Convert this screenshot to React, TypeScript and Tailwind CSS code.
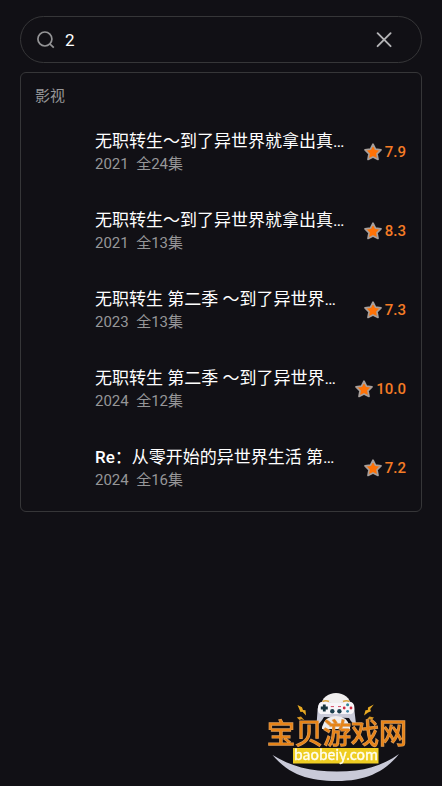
import { useState } from 'react';

type Show = {
  id: number;
  title: string;
  year: string;
  episodes: string;
  score: string;
};

const shows: Show[] = [
  { id: 1, title: '无职转生～到了异世界就拿出真本事～', year: '2021', episodes: '全24集', score: '7.9' },
  { id: 2, title: '无职转生～到了异世界就拿出真本事～', year: '2021', episodes: '全13集', score: '8.3' },
  { id: 3, title: '无职转生 第二季 ～到了异世界就拿出真本事～', year: '2023', episodes: '全13集', score: '7.3' },
  { id: 4, title: '无职转生 第二季 ～到了异世界就拿出真本事～', year: '2024', episodes: '全12集', score: '10.0' },
  { id: 5, title: 'Re：从零开始的异世界生活 第三季', year: '2024', episodes: '全16集', score: '7.2' },
];

const SearchIcon = () => (
  <svg className="h-5 w-5 shrink-0" viewBox="0 0 20 20" fill="none" stroke="#949496" strokeWidth="1.7" aria-hidden="true">
    <circle cx="7.9" cy="9" r="7" />
    <path d="M12.8 13.8 16.8 17.6" />
  </svg>
);

const CloseIcon = () => (
  <svg className="h-5 w-5" viewBox="0 0 20 20" fill="none" stroke="#b4b4b6" strokeWidth="1.9" strokeLinecap="round" aria-hidden="true">
    <path d="M3.6 3.2 16.6 16.2M16.6 3.2 3.6 16.2" />
  </svg>
);

const StarIcon = () => (
  <svg className="h-5 w-5 shrink-0" viewBox="0 0 20 20" aria-hidden="true">
    <path
      d="M10 2.2 12.5 7.1 18 7.9 14 11.8 15 17.4 10 14.9 5 17.4 6 11.8 2 7.9 7.5 7.1Z"
      fill="#ff7206"
      stroke="#a8a09c"
      strokeWidth="1.7"
      strokeLinejoin="round"
    />
  </svg>
);

const ShowRow = ({ show }: { show: Show }) => {
  // latin words are set a little heavier than the Chinese text
  const parts = show.title.split(/([A-Za-z]+)/).filter(Boolean);

  return (
    <li className="flex h-[79px] items-center gap-3">
      <div className="h-16 w-12 shrink-0" />
      <div className="min-w-0 flex-1">
        <h2 className="truncate text-[17px] leading-6 font-normal text-white">
          {parts.map((part) => (
            <span key={part} className={/[A-Za-z]/.test(part) ? 'font-medium' : 'font-normal'}>
              {part}
            </span>
          ))}
        </h2>
        <p className="text-[15px] leading-[22px] whitespace-pre text-[#969698]">
          {show.year}
          {'  '}
          {show.episodes}
        </p>
      </div>
      <div className="flex shrink-0 items-center gap-0.5 text-[15px] leading-5 font-medium text-[#f57c26]">
        <StarIcon />
        <span>{show.score}</span>
      </div>
    </li>
  );
};

const Watermark = () => (
  <svg className="pointer-events-none fixed right-[22px] bottom-0 h-[106px] w-40" viewBox="0 0 160 106" aria-label="宝贝游戏网">
    <path d="M12.5 75C30 86 50 91.5 77 91.5S122 86 139 74C124 93 104 101 77 101S29 95 12.5 75Z" fill="#c9cad8" />

    <ellipse cx="76" cy="25" rx="14.5" ry="12" fill="#f0eeee" />
    <path d="M57.5 31C58 25 60 21 65 21.5L76 24 87 21.5C92 21 94 25 94.5 31L96 44Q92 44 89 38L64 37Q60 44 56.5 45Z" fill="#c9cad8" />
    <path d="M62 47Q65 36 76 36T90 47V49H62Z" fill="#f0eeee" />
    <path d="M58.5 25C60 20.5 65 21 70 23H82C87 21 92 20.5 94 25C95.5 31 93 35 89 34H63C58 35 57 30 58.5 25Z" fill="#f7f5f8" />
    <path d="M62.5 21.6Q65.5 20 69 21.6M83 21.6Q86.5 20 89.5 21.6" stroke="#d9a43c" strokeWidth="1.6" fill="none" />
    <path d="M64.3 24.5V31.5M60.8 28H67.8" stroke="#17343f" strokeWidth="2.8" />
    <path d="M70.8 26.6H74M78 26.6H81" stroke="#d44b65" strokeWidth="1" />
    <circle cx="72.3" cy="31.2" r="2.2" fill="#1c4050" />
    <circle cx="79.4" cy="31.2" r="2.2" fill="#1c4050" />
    <circle cx="87.6" cy="24.8" r="1.5" fill="#338896" />
    <circle cx="84.2" cy="28" r="1.4" fill="#d02c44" />
    <circle cx="91" cy="28" r="1.4" fill="#d02c44" />
    <circle cx="87.6" cy="31.3" r="1.4" fill="#4184a0" />

    <path d="M37.5 25 42 27.2 43 30 45.5 30.2 46 35.5 42.5 31.8 40.5 32Z" fill="#e9aa22" />
    <path d="M113.8 24.6 108 27.4 107.8 30 105.5 30.2 104 35.5 108 32.5 111 31.2 110.2 29Z" fill="#e9aa22" />
    <path d="M36.8 37.5 41 36.5 44.5 40.2 41.5 39.3 39.5 40Z" fill="#d99721" />
    <path d="M114 37.5 109.5 36.5 106 40.2 109 39.3 111.5 40Z" fill="#d99721" />

    <text
      x="7"
      y="64"
      className="font-['Noto_Sans_CJK_SC',sans-serif] text-[28px] font-normal"
      fill="#e78418"
      stroke="#dc9c58"
      strokeWidth="1.3"
      paintOrder="stroke"
    >
      宝贝游戏网
    </text>

    <path d="M33 68H118.5V83.5H33Z" fill="#efcd22" />
    <text
      x="76"
      y="80"
      textAnchor="middle"
      className="font-['Noto_Sans_CJK_SC',sans-serif] text-[14px] font-normal"
      fill="#fffef0"
      stroke="#fffef0"
      strokeWidth="0.4"
    >
      baobeiy.com
    </text>
  </svg>
);

const App = () => {
  const [query, setQuery] = useState('2');

  return (
    <main className="min-h-screen bg-[#111015] px-5 pt-4 font-['Roboto','Noto_Sans_CJK_SC',sans-serif]">
      <form
        role="search"
        className="flex h-[47px] items-center gap-2 rounded-full border border-[#363638] pr-[27px] pl-4"
        onSubmit={(e) => e.preventDefault()}
      >
        <SearchIcon />
        <input
          type="text"
          aria-label="搜索"
          className="h-8 min-w-0 flex-1 bg-transparent text-[17px] text-white outline-none"
          value={query}
          onChange={(e) => setQuery(e.target.value)}
        />
        <button type="button" aria-label="清除" onClick={() => setQuery('')}>
          <CloseIcon />
        </button>
      </form>

      <section className="mt-[9px] rounded-md border border-[#363638] pr-[15px] pb-1 pl-3.5">
        <h1 className="pt-3 pb-[5px] text-[15px] leading-[22px] text-[#969698]">影视</h1>
        <ul>
          {shows.map((show) => (
            <ShowRow key={show.id} show={show} />
          ))}
        </ul>
      </section>

      <Watermark />
    </main>
  );
};

export default App;
